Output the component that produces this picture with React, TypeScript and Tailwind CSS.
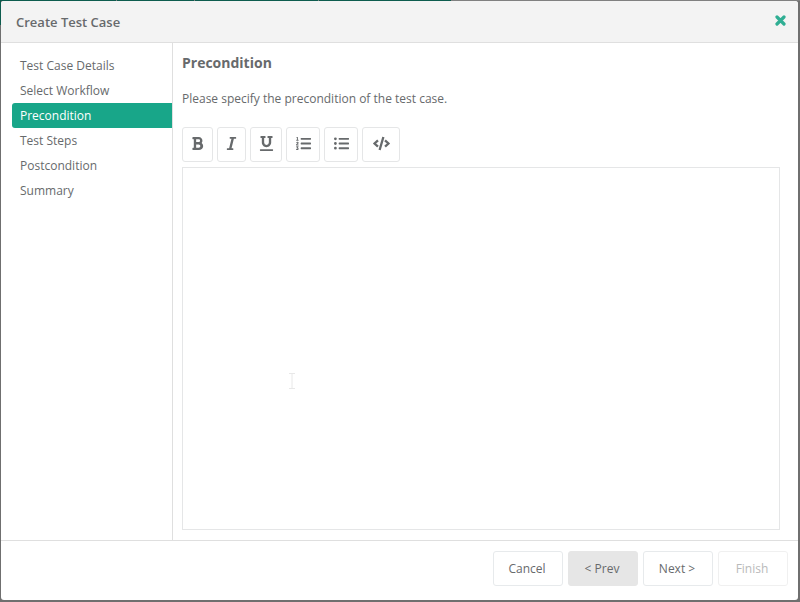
import { FaBold, FaItalic, FaUnderline, FaListOl, FaListUl, FaCode } from "react-icons/fa";

const steps = ["Test Case Details", "Select Workflow", "Precondition", "Test Steps", "Postcondition", "Summary"];

function ToolButton({ width, children }: { width: string; children: React.ReactNode }) {
  return (
    <button className={`flex h-[35px] items-center justify-center rounded-[3px] border border-[#e5e6e7] bg-white pb-[2px] text-[#676a6c] ${width}`}>
      {children}
    </button>
  );
}

function FooterButton({ label, variant }: { label: string; variant?: "active" | "disabled" }) {
  const look =
    variant === "active"
      ? "bg-[#e6e6e6] border-[#e6e6e6] text-[#676a6c]"
      : variant === "disabled"
        ? "bg-white border-[#f0f0f0] text-[#b9baba]"
        : "bg-white border-[#e7eaec] text-[#676a6c]";
  return <button className={`h-[35px] w-[70px] rounded-[3px] border pr-[2px] text-[12px] ${look}`}>{label}</button>;
}

export default function App() {
  return (
    <div className="flex h-[602px] w-[800px] flex-col overflow-hidden bg-[#6f6f6f] font-['Open_Sans',sans-serif]">
      {/* backdrop showing above the dialog */}
      <div className="flex h-px shrink-0 bg-[#808080]">
        <div className="w-[116px] bg-[#0d5c4e]" />
        <div className="ml-px w-[77px] bg-[#0d5c4e]" />
        <div className="ml-px w-[123px] bg-[#0d5c4e]" />
        <div className="ml-px w-[132px] bg-[#0d5c4e]" />
      </div>
      <div className="flex min-h-0 flex-1 pr-[2px] pb-[2px]">
        <div className="flex w-px shrink-0 flex-col bg-[#6f6f6f]">
          <div className="h-[24px] bg-[#0d5c4e]" />
        </div>
        <div className="flex min-w-0 flex-1 flex-col overflow-hidden rounded-[3px] bg-white">
          <header className="flex h-[41px] shrink-0 items-center justify-between bg-[#f3f3f3] pt-[3px] pr-[12px] pl-[15px]">
            <h1 className="text-[13px] font-semibold text-[#676a6c]">Create Test Case</h1>
            <svg width="11" height="11" viewBox="0 0 11 11" className="-mt-[5px] text-[#2fae93]">
              <path d="M2 2 L9 9 M9 2 L2 9" stroke="currentColor" strokeWidth="3.2" strokeLinecap="round" />
            </svg>
          </header>
          <div className="flex min-h-0 flex-1 border-t border-[#dfdfdf]">
            <nav className="w-[172px] shrink-0 border-r border-[#dfdfdf] pt-[10px] pl-[11px]">
              {steps.map((step) =>
                step === "Precondition" ? (
                  <div key={step} className="flex h-[25px] items-center rounded-l-[3px] bg-[#18a689] pl-2 text-[12px] text-white">
                    {step}
                  </div>
                ) : (
                  <div key={step} className="flex h-[25px] items-center pl-2 text-[12px] text-[#676a6c]">
                    {step}
                  </div>
                ),
              )}
            </nav>
            <main className="flex min-w-0 flex-1 flex-col pt-[10px] pr-[18px] pb-[10px] pl-[9px] text-[#676a6c]">
              <h2 className="text-[14px] leading-[20px] font-bold">Precondition</h2>
              <p className="mt-[17px] text-[12px] leading-[18px]">Please specify the precondition of the test case.</p>
              <div className="mt-[19px] flex gap-[4px]">
                <ToolButton width="w-[31px]">
                  <FaBold size={15} />
                </ToolButton>
                <ToolButton width="w-[29px]">
                  <FaItalic size={15} />
                </ToolButton>
                <ToolButton width="w-[32px]">
                  <FaUnderline size={15} />
                </ToolButton>
                <ToolButton width="w-[34px]">
                  <FaListOl size={15} />
                </ToolButton>
                <ToolButton width="w-[34px]">
                  <FaListUl size={15} />
                </ToolButton>
                <ToolButton width="w-[38px]">
                  <FaCode size={17} />
                </ToolButton>
              </div>
              <div className="relative mt-[5px] min-h-0 flex-1 border border-[#e5e6e7]">
                <svg width="6" height="16" viewBox="0 0 6 16" className="absolute top-[205px] left-[106px]" fill="none" stroke="#e8e8e8">
                  <path d="M0 .5 H6 M3 .5 V15.5 M0 15.5 H6" />
                </svg>
              </div>
            </main>
          </div>
          <footer className="flex h-[60px] shrink-0 items-start justify-end gap-[5px] border-t border-[#dfdfdf] pt-[10px] pr-[10px]">
            <FooterButton label="Cancel" />
            <FooterButton label="< Prev" variant="active" />
            <FooterButton label="Next >" />
            <FooterButton label="Finish" variant="disabled" />
          </footer>
        </div>
      </div>
    </div>
  );
}
